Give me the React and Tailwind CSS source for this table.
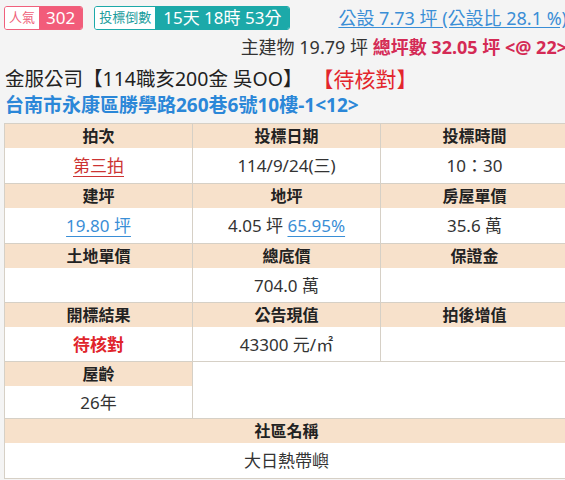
import React from 'react'

const font = { fontFamily: '"Noto Sans", "Noto Sans CJK TC", sans-serif' }

const Block = ({ label, children, className = '', valueClass = 'h-[34px]' }) => (
  <div className={`border-r border-b border-[#d6d0c6] ${className}`}>
    <div className="h-[24px] bg-[#f7e1cb] flex items-center justify-center text-[16px] font-bold text-[#222]">
      {label}
    </div>
    <div className={`${valueClass} bg-white flex items-center justify-center text-[17px] text-[#333]`}>
      {children}
    </div>
  </div>
)

const App = () => {
  return (
    <div className="w-[565px] h-[480px] overflow-hidden bg-[#f4f4f4] leading-none" style={font}>
      <div className="w-[567px]">
        <div className="flex items-center pt-[5px] pl-[4px] h-[30px]">
          <div className="flex h-[24px] border border-[#f0607c] rounded-[3px] overflow-hidden">
            <span className="bg-white text-[#ef5f7a] text-[13px] px-[4px] flex items-center">人氣</span>
            <span className="bg-[#f25c7a] text-white text-[17px] px-[7px] flex items-center">302</span>
          </div>
          <div className="flex h-[24px] ml-[11px] border border-[#1ca9a9] rounded-[3px] overflow-hidden">
            <span className="bg-white text-[#1a9d9d] text-[13px] px-[4px] flex items-center">投標倒數</span>
            <span className="bg-[#1ca9a9] text-white text-[17px] px-[8px] flex items-center">15天 18時 53分</span>
          </div>
          <a className="ml-auto whitespace-nowrap text-[18px] text-[#3a8ed6] underline underline-offset-2">
            公設 7.73 坪 (公設比 28.1 %)
          </a>
        </div>
        <div className="flex justify-end mt-[4px] whitespace-nowrap text-[18px] text-[#333] h-[26px] items-center">
          主建物 19.79 坪&nbsp;
          <span className="font-bold text-[#d42a55]">總坪數 32.05 坪 &lt;@ 22&gt;</span>
        </div>
      </div>
      <div className="pl-[5px] mt-[6px] text-[19.5px] text-[#222] h-[26px] flex items-center whitespace-nowrap">
        金服公司【114職亥200金 吳OO】
        <span className="ml-[10px] text-[21px] text-[#e3262c]">【待核對】</span>
      </div>
      <div className="pl-[5px] text-[19px] font-bold text-[#2b87d8] h-[26px] flex items-center whitespace-nowrap">
        台南市永康區勝學路260巷6號10樓-1&lt;12&gt;
      </div>
      <div className="ml-[4px] mt-[5px] w-[564px] grid grid-cols-[188px_188px_188px] border-l border-t border-[#d6d0c6]">
        <Block label="拍次" valueClass="h-[35px]">
          <a className="text-[#cc3333] underline underline-offset-4">第三拍</a>
        </Block>
        <Block label="投標日期" valueClass="h-[35px]">114/9/24(三)</Block>
        <Block label="投標時間" valueClass="h-[35px]">10：30</Block>

        <Block label="建坪" valueClass="h-[35px]">
          <a className="text-[#3a8ed6] underline underline-offset-4">19.80 坪</a>
        </Block>
        <Block label="地坪" valueClass="h-[35px]">
          4.05 坪&nbsp;<a className="text-[#3a8ed6] underline underline-offset-4">65.95%</a>
        </Block>
        <Block label="房屋單價" valueClass="h-[35px]">35.6 萬</Block>

        <Block label="土地單價"></Block>
        <Block label="總底價">704.0 萬</Block>
        <Block label="保證金"></Block>

        <Block label="開標結果">
          <span className="text-[#e0242b] font-semibold">待核對</span>
        </Block>
        <Block label="公告現值">43300 元/㎡</Block>
        <Block label="拍後增值"></Block>

        <Block label="屋齡" valueClass="h-[32px]">26年</Block>
        <div className="col-span-2 bg-white border-r border-b border-[#d6d0c6]"></div>

        <Block label="社區名稱" className="col-span-3" valueClass="h-[35px]">大日熱帶嶼</Block>
      </div>
    </div>
  )
}

export default App
